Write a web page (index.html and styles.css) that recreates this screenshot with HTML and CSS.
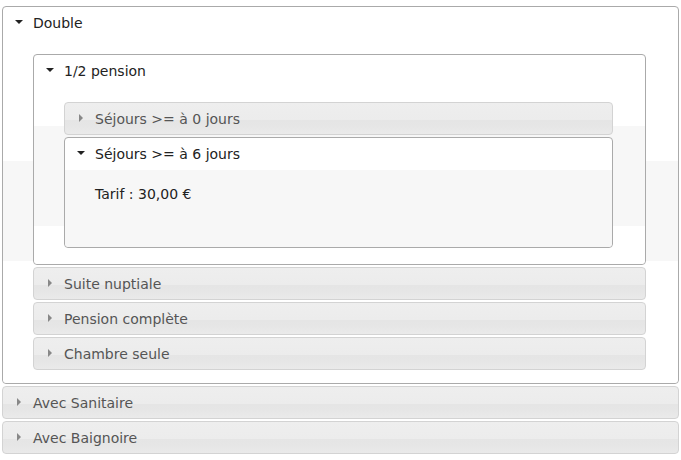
FILE: index.html
```html
<!DOCTYPE html>
<html lang="fr">
<head>
    <meta charset="UTF-8">
    <title>Tarifs</title>
    <link rel="stylesheet" href="styles.css">
</head>
<body>
    <div class="accordion">
        <div class="section open">
            <div class="head"><span class="icon down"></span>Double</div>
            <div class="panel outer">
                <div class="accordion">
                    <div class="section open">
                        <div class="head"><span class="icon down"></span>1/2 pension</div>
                        <div class="panel">
                            <div class="accordion">
                                <div class="section">
                                    <div class="head"><span class="icon right"></span>Séjours &gt;= à 0 jours</div>
                                </div>
                                <div class="section open">
                                    <div class="head"><span class="icon down"></span>Séjours &gt;= à 6 jours</div>
                                    <div class="panel tarif">Tarif : 30,00 €</div>
                                </div>
                            </div>
                        </div>
                    </div>
                    <div class="section">
                        <div class="head"><span class="icon right"></span>Suite nuptiale</div>
                    </div>
                    <div class="section">
                        <div class="head"><span class="icon right"></span>Pension complète</div>
                    </div>
                    <div class="section">
                        <div class="head"><span class="icon right"></span>Chambre seule</div>
                    </div>
                </div>
            </div>
        </div>
        <div class="section">
            <div class="head"><span class="icon right"></span>Avec Sanitaire</div>
        </div>
        <div class="section">
            <div class="head"><span class="icon right"></span>Avec Baignoire</div>
        </div>
    </div>
</body>
</html>
```

FILE: styles.css
```css
body {
    margin: 0;
    padding: 4px 2px 0 2px;
    background: #fff;
    font-family: "DejaVu Sans", Verdana, sans-serif;
    font-size: 14px;
}

.accordion {
    display: flex;
    flex-direction: column;
}

.section {
    margin-top: 2px;
    border: 1px solid #d3d3d3;
    border-radius: 4px;
    background: linear-gradient(#eeeeee 0, #ececec 55%, #e5e5e5 56%, #e6e6e6 75%, #eaeaea 100%);
    color: #555;
}
.section:first-child {
    margin-top: 0;
}
body > .accordion > .section:first-child {
    margin-top: 2px;
}

.section.open {
    border-color: #aaa;
    background: #fff;
    color: #222;
}

.head {
    display: flex;
    align-items: center;
    padding-left: 12px;
    box-sizing: border-box;
    height: 32px;
}
.section:not(.open) > .head {
    height: 31px;
    padding-top: 1px;
}

.icon {
    width: 18px;
    height: 8px;
    position: relative;
    top: -1px;
}
.icon.down::before {
    content: "";
    position: absolute;
    left: 0;
    top: 2px;
    border-left: 4px solid transparent;
    border-right: 4px solid transparent;
    border-top: 4px solid #222;
}
.icon.right::before {
    content: "";
    position: absolute;
    left: 2px;
    top: 0;
    border-top: 4px solid transparent;
    border-bottom: 4px solid transparent;
    border-left: 4px solid #888;
}

.panel {
    padding: 15px 32px 16px 30px;
    border-radius: 0 0 4px 4px;
    background-color: #fff;
    background-image: linear-gradient(#f7f7f7, #f7f7f7);
    background-size: 100% 100px;
    background-position: 50% 50%;
    background-repeat: repeat-x;
}
.panel.outer {
    padding-bottom: 13px;
}

.panel.tarif {
    height: 47px;
    padding-top: 15px;
    padding-bottom: 15px;
    line-height: 18px;
}
```
